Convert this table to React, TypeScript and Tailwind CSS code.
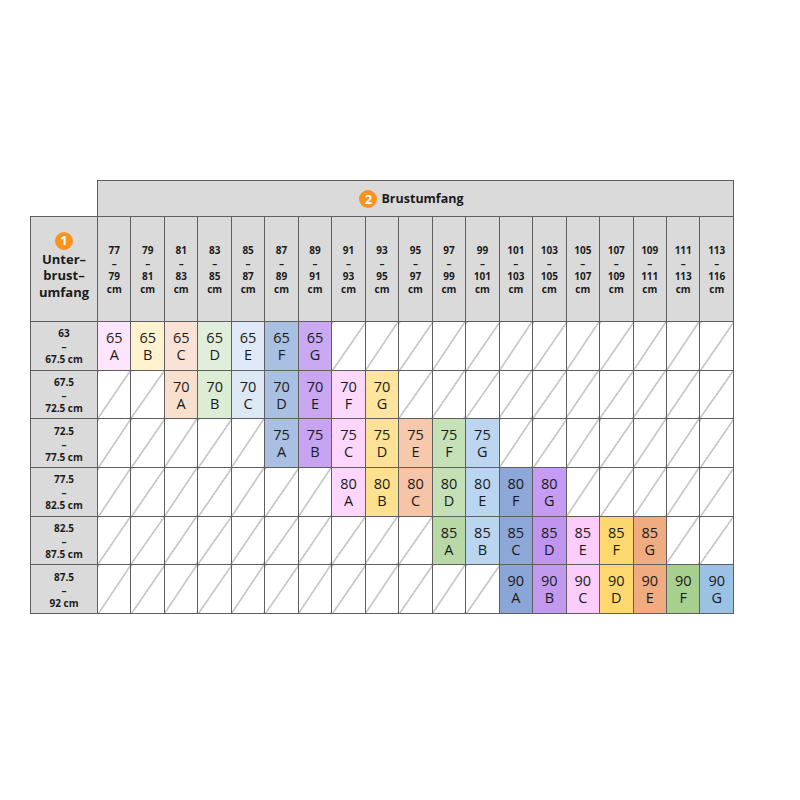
const cols: [string, string][] = [
  ["77", "79"],
  ["79", "81"],
  ["81", "83"],
  ["83", "85"],
  ["85", "87"],
  ["87", "89"],
  ["89", "91"],
  ["91", "93"],
  ["93", "95"],
  ["95", "97"],
  ["97", "99"],
  ["99", "101"],
  ["101", "103"],
  ["103", "105"],
  ["105", "107"],
  ["107", "109"],
  ["109", "111"],
  ["111", "113"],
  ["113", "116"],
];

// colour index = column % 7 : pink, yellow, peach, green, light blue, blue, purple
const rows = [
  {
    from: "63",
    to: "67.5 cm",
    band: "65",
    start: 0,
    palette: ["bg-[#fde6fd]", "bg-[#fff3cf]", "bg-[#fbe2d6]", "bg-[#e0eedb]", "bg-[#dfe9f7]", "bg-[#a9c0e2]", "bg-[#c9a9f3]"],
  },
  {
    from: "67.5",
    to: "72.5 cm",
    band: "70",
    start: 2,
    palette: ["bg-[#fcd9fc]", "bg-[#fde59e]", "bg-[#f9dfce]", "bg-[#dcecd5]", "bg-[#dde8f5]", "bg-[#a9c0e2]", "bg-[#c8a6f2]"],
  },
  {
    from: "72.5",
    to: "77.5 cm",
    band: "75",
    start: 5,
    palette: ["bg-[#fcd6fc]", "bg-[#fde296]", "bg-[#f6c8ac]", "bg-[#c6e1b8]", "bg-[#bcd6ef]", "bg-[#a9c0e2]", "bg-[#c7a3f2]"],
  },
  {
    from: "77.5",
    to: "82.5 cm",
    band: "80",
    start: 7,
    palette: ["bg-[#fcd6fc]", "bg-[#fde18e]", "bg-[#f6c4a6]", "bg-[#c5e0b5]", "bg-[#bad5ef]", "bg-[#8ca7d8]", "bg-[#c59bf3]"],
  },
  {
    from: "82.5",
    to: "87.5 cm",
    band: "85",
    start: 10,
    palette: ["bg-[#fccdfb]", "bg-[#fdd86f]", "bg-[#f0ab80]", "bg-[#b8d9a5]", "bg-[#bad5ef]", "bg-[#8ca7d8]", "bg-[#c095ef]"],
  },
  {
    from: "87.5",
    to: "92 cm",
    band: "90",
    start: 12,
    palette: ["bg-[#fccdfb]", "bg-[#fdd86f]", "bg-[#f0ab80]", "bg-[#a7d08f]", "bg-[#9bc1e5]", "bg-[#8ba5d6]", "bg-[#c19af0]"],
  },
];

const cups = ["A", "B", "C", "D", "E", "F", "G"];

const Badge = ({ n }: { n: string }) => (
  <span className="inline-flex items-center justify-center w-[18px] h-[18px] rounded-full bg-[#f7941d] text-white text-[13px] font-bold leading-none">
    {n}
  </span>
);

const App = () => {
  return (
    <div className="w-[800px] h-[800px] bg-white pt-[180px] pl-[30px] font-['Open_Sans','Noto_Sans',sans-serif] text-[#1a1a1a]">
      <table className="table-fixed border-collapse w-[704px]">
        <colgroup>
          <col className="w-[67px]" />
          {cols.map((_, i) => (
            <col key={i} />
          ))}
        </colgroup>
        <thead>
          <tr className="h-[36px]">
            <th className="p-0" />
            <th
              colSpan={19}
              className="p-0 bg-[#dadada] border border-[#5f5f5f]"
            >
              <div className="flex items-center justify-center gap-[4px] pt-[1px] pr-[8px]">
                <Badge n="2" />
                <span className="text-[12.5px] font-bold">Brustumfang</span>
              </div>
            </th>
          </tr>
          <tr className="h-[105px]">
            <th className="p-0 bg-[#dadada] border border-[#5f5f5f]">
              <div className="flex flex-col items-center pb-[6px]">
                <Badge n="1" />
                <span className="text-[13px] font-bold leading-[16.5px] mt-[1px]">
                  Unter–
                  <br />
                  brust–
                  <br />
                  umfang
                </span>
              </div>
            </th>
            {cols.map(([a, b]) => (
              <th
                key={a}
                className="p-0 bg-[#dadada] border border-[#5f5f5f] text-[10px] font-bold leading-[13px]"
              >
                <div className="pt-[1px]">
                  {a}
                  <br />–<br />
                  {b}
                  <br />
                  cm
                </div>
              </th>
            ))}
          </tr>
        </thead>
        <tbody>
          {rows.map((r) => (
            <tr key={r.band} className="h-[48.7px]">
              <th className="p-0 bg-[#dadada] border border-[#5f5f5f] text-[10px] font-bold leading-[13px]">
                <div className="pt-[2px]">
                  {r.from}
                  <br />–<br />
                  {r.to}
                </div>
              </th>
              {cols.map((_, c) => {
                const k = c - r.start;
                if (k >= 0 && k < 7) {
                  return (
                    <td
                      key={c}
                      className={`p-0 border border-[#5f5f5f] text-center text-[14.5px] leading-[17px] ${r.palette[c % 7]}`}
                    >
                      {r.band}
                      <br />
                      {cups[k]}
                    </td>
                  );
                }
                return (
                  <td
                    key={c}
                    className="p-0 border border-[#5f5f5f] bg-[linear-gradient(to_bottom_right,transparent_calc(50%-0.6px),#5f5f5f_50%,transparent_calc(50%+0.6px))]"
                  />
                );
              })}
            </tr>
          ))}
        </tbody>
      </table>
    </div>
  );
};

export default App;
